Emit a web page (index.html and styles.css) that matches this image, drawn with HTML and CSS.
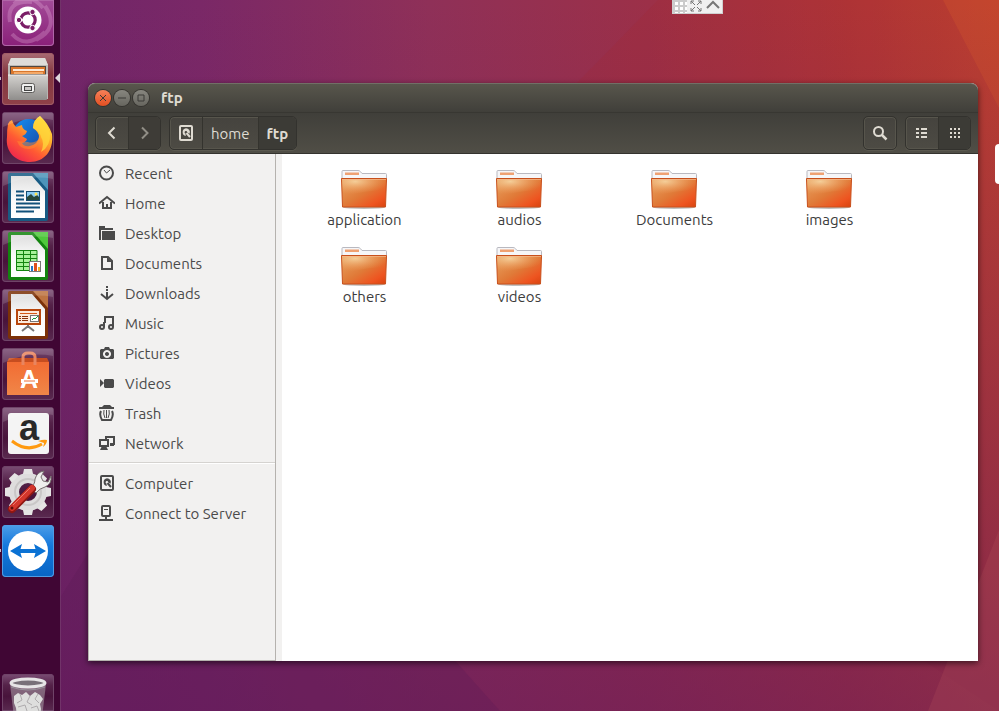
FILE: index.html
```
<!DOCTYPE html>
<html lang="en">
<head>
<meta charset="utf-8">
<meta name="viewport" content="width=device-width, initial-scale=1">
<title>ftp</title>
<link rel="stylesheet" href="styles.css">
</head>

<body>

<!-- shared icons and gradients -->
<svg class="defs" width="0" height="0" aria-hidden="true">
  <defs>
    <linearGradient id="g-folder" x1="0" y1="0" x2="1" y2="1">
      <stop offset="0" stop-color="#e8a563"/>
      <stop offset=".5" stop-color="#e07a38"/>
      <stop offset=".8" stop-color="#ee5420"/>
      <stop offset="1" stop-color="#d8430f"/>
    </linearGradient>
    <radialGradient id="g-shine" cx=".3" cy=".15" r=".75">
      <stop offset="0" stop-color="#f8dcaa" stop-opacity=".8"/>
      <stop offset="1" stop-color="#f0a060" stop-opacity="0"/>
    </radialGradient>
    <linearGradient id="g-metal" x1="0" y1="0" x2="0" y2="1">
      <stop offset="0" stop-color="#d4d2cf"/>
      <stop offset="1" stop-color="#8f8d8b"/>
    </linearGradient>
    <linearGradient id="g-paper" x1="0" y1="0" x2="0" y2="1">
      <stop offset="0" stop-color="#dedede"/>
      <stop offset=".5" stop-color="#fafafa"/>
      <stop offset="1" stop-color="#ffffff"/>
    </linearGradient>
    <linearGradient id="g-fox" x1=".9" y1="0" x2=".2" y2="1">
      <stop offset="0" stop-color="#fff04a"/>
      <stop offset=".35" stop-color="#ffb02a"/>
      <stop offset=".65" stop-color="#ff5b33"/>
      <stop offset="1" stop-color="#ec2050"/>
    </linearGradient>
    <linearGradient id="g-globe" x1="0" y1="0" x2="1" y2="1">
      <stop offset="0" stop-color="#1490f5"/>
      <stop offset="1" stop-color="#1b3f98"/>
    </linearGradient>
    <linearGradient id="g-bag" x1="0" y1="0" x2="0" y2="1">
      <stop offset="0" stop-color="#f26c33"/>
      <stop offset="1" stop-color="#f08648"/>
    </linearGradient>
    <linearGradient id="g-wall" x1="0" y1="0" x2="1" y2="0">
      <stop offset="0" stop-color="#6c2469"/>
      <stop offset=".2" stop-color="#7a2867"/>
      <stop offset=".43" stop-color="#8f3058"/>
      <stop offset=".65" stop-color="#9c3048"/>
      <stop offset=".85" stop-color="#b03638"/>
      <stop offset="1" stop-color="#c04430"/>
    </linearGradient>
    <linearGradient id="g-dusk" x1="0" y1="0" x2="0" y2="1">
      <stop offset="0" stop-color="#68205c" stop-opacity="0"/>
      <stop offset="1" stop-color="#641a5c" stop-opacity=".6"/>
    </linearGradient>
  </defs>

  <symbol id="folder" viewBox="1 0 48 42">
    <path d="M2 14V3.500q0-1 1-1h15q1.500 0 2.500 1.200l1.500 1.800h23.500q1 0 1 1V14z" fill="#f6f6f8" stroke="#b9b9c0"/>
    <path d="M5 4.500h14v2.500H5z" fill="#efa172"/>
    <ellipse cx="24" cy="39.500" rx="21" ry="1.500" fill="#000" opacity=".25"/>
    <path d="M1.500 10.500h45l-1 28.500H2.500z" fill="url(#g-folder)" stroke="#c8501c"/>
    <path d="M2 11h44l-.3 11Q30 22 3 28z" fill="url(#g-shine)"/>
    <path d="M2 11.500h44" stroke="#f5b98c" opacity=".7"/>
  </symbol>

  <symbol id="disk" viewBox="0 0 16 16">
    <path fill="currentColor" fill-rule="evenodd" d="M3 0h10a2 2 0 0 1 2 2v12a2 2 0 0 1-2 2H3a2 2 0 0 1-2-2V2a2 2 0 0 1 2-2zm0 2v12h10V2z"/>
    <path fill="currentColor" fill-rule="evenodd" d="M8 3.200a3.900 3.900 0 0 1 3.500 5.600L9.200 7.200A1.300 1.300 0 1 0 7.500 8.500l.3 2.400A3.900 3.900 0 0 1 8 3.200z"/>
    <path d="M8.500 8l3.500 4" stroke="currentColor" stroke-width="2"/>
  </symbol>

  <symbol id="tile-shine" viewBox="0 0 52 52">
    <path d="M1 1h50v7Q26 3 1 15z" fill="#fff" opacity=".14"/>
  </symbol>
</svg>

<svg class="wallpaper" viewBox="0 0 999 711" preserveAspectRatio="none" aria-hidden="true">
  <rect width="999" height="711" fill="url(#g-wall)"/>
  <path d="M658 0L570 90 400 310 999 711V0z" fill="#a8282c" opacity=".18"/>
  <path d="M943 0l56 108V0z" fill="#d85a2c" opacity=".3"/>
  <rect width="999" height="711" fill="url(#g-dusk)"/>
  <path d="M60 598L200 375 500 711H60z" fill="#5c1a56" opacity=".3"/>
  <path d="M999 530L928 711h71z" fill="#c05a60" opacity=".2"/>
</svg>

<nav class="launcher" aria-label="Launcher">
  <button class="tile tile-first dash" aria-label="Search your computer">
    <svg viewBox="0 0 52 52">
      <path d="M8 28Q4 6 30 8M43 12Q58 34 34 46M10 40Q24 56 43 38M12 10Q26-4 41 14" fill="none" stroke="#eebce4" stroke-width="4" opacity=".28"/>
      <circle cx="26" cy="26" r="13.500" fill="#fff"/>
      <circle cx="26" cy="26" r="7.200" fill="none" stroke="#7a1c66" stroke-width="3.200"/>
      <path d="M26 26H14M26 26l6 10.500M26 26l6-10.500" stroke="#fff" stroke-width="1.500"/>
      <g fill="#7a1c66" stroke="#fff"><circle cx="17" cy="26" r="2.700"/><circle cx="30.500" cy="34" r="2.700"/><circle cx="30.500" cy="18" r="2.700"/></g>
    </svg>
  </button>
  <button class="tile files running active" aria-label="Files">
    <svg viewBox="0 0 52 52">
      <path d="M9 5h34l3 7v34H6V12z" fill="#bdbbb8"/>
      <path d="M9 5h34l3 7H6z" fill="#dedcda"/>
      <path d="M8 13h36v10H8z" fill="#504640"/>
      <path d="M9 14h34v7H9z" fill="#d9762c"/>
      <path d="M11 16h31v2H11z" fill="#fbe9d6"/>
      <path d="M12 19h29v2H12z" fill="#f4a968"/>
      <path d="M6 22h40v1l-1 23q0 1-1 1H8q-1 0-1-1z" fill="url(#g-metal)"/>
      <path d="M6 22h40" stroke="#efedeb"/>
      <rect x="19.500" y="30.500" width="13" height="9" rx="2" fill="#f0f0ef" stroke="#5d5b59"/>
      <rect x="22.500" y="33.500" width="7" height="4" fill="#c9c7c5" stroke="#444"/>
    </svg>
  </button>
  <button class="tile" aria-label="Firefox">
    <svg viewBox="0 0 52 52">
      <circle cx="27" cy="24" r="17" fill="url(#g-globe)"/>
      <path d="M6 12q1-3 4-4 1 4 4 7l6-2q0 4 5 6-1 4-5 5 3 2 5 3-1 3-5 4 2 4 8 3 8-2 9-9 0-5-6-9 0-8 7-12 8 7 12 18c2 17-8 28-22 28S3 40 5 25q0-8 1-13z" fill="url(#g-fox)"/>
      <path d="M31 16q0-8 7-12 7 8 10 17 1 13-9 19 4-9 0-15-1-5-8-9z" fill="#ffd83c" opacity=".75"/>
      <path d="M15 29q3 9 13 8 9-1 10-11-6 6-12 4z" fill="#ff8a30" opacity=".5"/>
      <use href="#tile-shine"/>
    </svg>
  </button>
  <button class="tile" aria-label="LibreOffice Writer">
    <svg viewBox="0 0 52 52">
      <path d="M8 2h38v46q0 2-2 2H8q-2 0-2-2V4q0-2 2-2z" fill="#185b84"/>
      <path d="M31 2h15v17z" fill="#4d94ba"/>
      <path d="M9 5h21l13 15v27H9z" fill="url(#g-paper)"/>
      <path d="M14 20.500h8M14 24.500h8M14 28.500h8M14 32.500h24M14 36.500h24M14 40.500h18" stroke="#11517a" stroke-width="2"/>
      <rect x="24.500" y="20.500" width="13" height="9" fill="#8ccdf5" stroke="#174e72"/>
      <path d="M25 29v-3l4-3 3 3 3-2 2 2v3z" fill="#28483a"/>
      <circle cx="34" cy="23" r="1.500" fill="#ffe450"/>
      <use href="#tile-shine"/>
    </svg>
  </button>
  <button class="tile" aria-label="LibreOffice Calc">
    <svg viewBox="0 0 52 52">
      <path d="M8 2h38v46q0 2-2 2H8q-2 0-2-2V4q0-2 2-2z" fill="#13840f"/>
      <path d="M31 2h15v17z" fill="#50c83c"/>
      <path d="M9 5h21l13 15v27H9z" fill="url(#g-paper)"/>
      <path d="M14 20h21v20H14z" fill="#a8f29a"/>
      <path d="M14.500 20v20.500H35V20.500H14M14 24.500h21M14 28.500h21M14 32.500h21M14 36.500h21M21.500 20v20M28.500 20v20" fill="none" stroke="#13840f"/>
      <rect x="27.500" y="31.500" width="11" height="10" fill="#fff" stroke="#777"/>
      <path d="M29 36h2v5h-2z" fill="#2478c8"/><path d="M32 33h3v8h-3z" fill="#e0501c"/><path d="M36 37h2v4h-2z" fill="#f0b030"/>
      <use href="#tile-shine"/>
    </svg>
  </button>
  <button class="tile" aria-label="LibreOffice Impress">
    <svg viewBox="0 0 52 52">
      <path d="M8 2h38v46q0 2-2 2H8q-2 0-2-2V4q0-2 2-2z" fill="#7c3108"/>
      <path d="M31 2h15v17z" fill="#bd7442"/>
      <path d="M9 5h21l13 15v27H9z" fill="url(#g-paper)"/>
      <path d="M20 42l5-4h2l5 4M26 36v3" fill="none" stroke="#777" stroke-width="2"/>
      <rect x="15" y="21" width="23" height="14" fill="#fdebdc" stroke="#b8460c" stroke-width="2"/>
      <path d="M18 24.500h17" stroke="#d55a18"/>
      <path d="M17 27.500h2m1 0h6m-9 2h2m1 0h6m-9 2h2m1 0h6" stroke="#8b3208"/>
      <rect x="28.500" y="26.500" width="8" height="6" fill="#fff" stroke="#777"/>
      <path d="M30 31l2-2 1 1 3-3" fill="none" stroke="#1b9b3c"/>
      <use href="#tile-shine"/>
    </svg>
  </button>
  <button class="tile" aria-label="Ubuntu Software">
    <svg viewBox="0 0 52 52">
      <path d="M7 10h38l2 4H5z" fill="#c64d20"/>
      <path d="M5 14h42v33H5z" fill="url(#g-bag)"/>
      <path d="M21 17V9q0-4 5-4h2q5 0 5 4v8" fill="none" stroke="#e88560" stroke-width="3"/>
      <text x="27" y="40" text-anchor="middle" class="bag-letter">A</text>
      <path d="M19 31h17v4H19z" fill="#fff"/><path d="M22 33h11" stroke="#ee7137"/>
      <use href="#tile-shine"/>
    </svg>
  </button>
  <button class="tile" aria-label="Amazon">
    <svg viewBox="0 0 52 52">
      <rect x="6" y="6" width="41" height="41" rx="3" fill="#f4f4f4"/>
      <text x="27" y="33" text-anchor="middle" class="shop-letter">a</text>
      <path d="M10 34q15 12 30 3" fill="none" stroke="#ff9a10" stroke-width="3"/>
      <path d="M36 34q6-2 9-1 0 4-4 7 1-3 1-4z" fill="#ff9a10"/>
      <use href="#tile-shine"/>
    </svg>
  </button>
  <button class="tile" aria-label="System Settings">
    <svg viewBox="0 0 52 52">
      <g transform="translate(26 26)">
        <circle r="14" fill="none" stroke="#dedddd" stroke-width="10"/>
        <g fill="#e5e4e4">
          <path id="tooth" d="M-5-18l1-5h8l1 5z"/>
          <use href="#tooth" transform="rotate(45)"/><use href="#tooth" transform="rotate(90)"/>
          <use href="#tooth" transform="rotate(135)"/><use href="#tooth" transform="rotate(180)"/>
          <use href="#tooth" transform="rotate(225)"/><use href="#tooth" transform="rotate(270)"/>
          <use href="#tooth" transform="rotate(315)"/>
        </g>
        <circle r="13" fill="none" stroke="#c9c7c7" stroke-width="2"/>
      </g>
      <path d="M28 22q5-3 5-9 2-7 9-8l-3 6 2 4 5 1 3-6q1 8-6 11-5 1-9 6z" fill="#efefed" stroke="#77706f"/>
      <path d="M10 43l20-20" stroke="#8f1712" stroke-width="8" stroke-linecap="round"/>
      <path d="M10 42l20-20" stroke="#d3362c" stroke-width="6" stroke-linecap="round"/>
      <path d="M11 39l17-17" stroke="#ee7a6c" stroke-width="1"/>
      <circle cx="10" cy="42" r="1.500" fill="#5e0d0b"/>
    </svg>
  </button>
  <button class="tile remote running" aria-label="TeamViewer">
    <svg viewBox="0 0 52 52">
      <circle cx="26" cy="26" r="20" fill="#fff"/>
      <path d="M8 26l12-7-1.500 5h15L32 19l12 7-12 7 1.500-5h-15l1.500 5z" fill="#0b72d4"/>
    </svg>
  </button>
  <button class="tile tile-last" aria-label="Trash">
    <svg viewBox="0 0 52 52">
      <path d="M8 10h36l-5 42H13z" fill="#b6afb4" opacity=".5"/>
      <path d="M12 22l4-3 4 2 4-3 4 4 5-4 5 3 3 4-3 5 1 5-3 17H16l-2-18-2-5z" fill="#dededd"/>
      <path d="M18 20l2 6-5 3M28 22l-3 6 5 3M36 20l-3 5 4 4M16 33l7-2 2 6M29 34l6-2 2 5" fill="none" stroke="#aeabad"/>
      <ellipse cx="26" cy="9" rx="17" ry="4" fill="#777078" stroke="#e6e5e6" stroke-width="3"/>
      <path d="M9 13q17 6 34 0" fill="none" stroke="#98939a"/>
    </svg>
  </button>
</nav>

<main class="desktop">
  <section class="window" aria-label="ftp">
    <header class="titlebar">
      <button class="wm wm-close" aria-label="Close"><svg viewBox="0 0 16 16"><path d="M5 5l6 6M11 5l-6 6"/></svg></button>
      <button class="wm" aria-label="Minimize"><svg viewBox="0 0 16 16"><path d="M4 8h8"/></svg></button>
      <button class="wm" aria-label="Maximize"><svg viewBox="0 0 16 16"><path d="M5 5h6v6H5z"/></svg></button>
      <h1 class="title">ftp</h1>
    </header>

    <div class="toolbar">
      <div class="group">
        <button class="btn" aria-label="Back"><svg viewBox="0 0 16 16"><path d="M10.500 2.500L5 8l5.500 5.500" fill="none" stroke="currentColor" stroke-width="2"/></svg></button>
        <button class="btn btn-off" aria-label="Forward"><svg viewBox="0 0 16 16"><path d="M5 2.500L10.500 8 5 13.500" fill="none" stroke="currentColor" stroke-width="2"/></svg></button>
      </div>
      <div class="group path">
        <button class="btn" aria-label="Computer"><svg viewBox="0 0 16 16"><use href="#disk"/></svg></button>
        <button class="btn">home</button>
        <button class="btn btn-on">ftp</button>
      </div>
      <div class="group search">
        <button class="btn" aria-label="Search"><svg viewBox="0 0 16 16"><path d="M10 10l4.500 4.500" stroke="currentColor" stroke-width="2.500"/><circle cx="6.500" cy="6.500" r="4.500" fill="none" stroke="currentColor" stroke-width="2"/></svg></button>
      </div>
      <div class="group">
        <button class="btn" aria-label="List view"><svg viewBox="0 0 16 16"><path d="M2 3h3v2H2zm5 0h6v2H7zM2 7h3v2H2zm5 0h6v2H7zm-5 4h3v2H2zm5 0h6v2H7z" fill="currentColor"/></svg></button>
        <button class="btn btn-on" aria-label="Icon view"><svg viewBox="0 0 16 16"><path d="M3 3h2v2H3zm4 0h2v2H7zm4 0h2v2h-2zM3 7h2v2H3zm4 0h2v2H7zm4 0h2v2h-2zM3 11h2v2H3zm4 0h2v2H7zm4 0h2v2h-2z" fill="currentColor"/></svg></button>
      </div>
    </div>

    <div class="content">
      <nav class="sidebar" aria-label="Places">
        <ul class="places">
          <li><a href="#"><svg viewBox="0 0 16 16"><circle cx="7.500" cy="8" r="6.500" fill="none" stroke="currentColor" stroke-width="2"/><path d="M5 5l2.500 3L11 5" fill="none" stroke="currentColor"/></svg>Recent</a></li>
          <li><a href="#"><svg viewBox="0 0 16 16"><path d="M0 8.500L8 2l8 6.500M4 7v6h8V7" fill="none" stroke="currentColor" stroke-width="2"/><path d="M7 9h2v4H7z" fill="currentColor"/></svg>Home</a></li>
          <li><a href="#"><svg viewBox="0 0 16 16"><path d="M0 1h6v2h8v2H2v10H0z" fill="currentColor"/><path d="M3 6h13v9H3z" fill="currentColor"/></svg>Desktop</a></li>
          <li><a href="#"><svg viewBox="0 0 16 16"><path d="M3 2h6l4 4v8H3z" fill="none" stroke="currentColor" stroke-width="2"/><path d="M8 2v5h5z" fill="currentColor"/></svg>Documents</a></li>
          <li><a href="#"><svg viewBox="0 0 16 16"><path d="M7 1h2v2H7zm0 3h2v2H7zm0 3h2v6H7z" fill="currentColor"/><path d="M2 9l6 5 6-5" fill="none" stroke="currentColor" stroke-width="2"/></svg>Downloads</a></li>
          <li><a href="#"><svg viewBox="0 0 16 16"><path d="M5 12V7m0 0h1V2h8v10M6 3v4" fill="none" stroke="currentColor" stroke-width="2"/><circle cx="3" cy="12" r="2" fill="none" stroke="currentColor" stroke-width="2"/><circle cx="12" cy="12" r="2" fill="none" stroke="currentColor" stroke-width="2"/></svg>Music</a></li>
          <li><a href="#"><svg viewBox="0 0 16 16"><path fill="currentColor" fill-rule="evenodd" d="M2 4h3l1-2h4l1 2h3l1 1v8l-1 1H2l-1-1V5zm6 1a4 4 0 1 0 .01 0zm0 2a2 2 0 1 1-.01 0z"/></svg>Pictures</a></li>
          <li><a href="#"><svg viewBox="0 0 16 16"><path d="M1 4l4 4-4 4zM6 4h8l1 1v7l-1 1H6l-1-1V5z" fill="currentColor"/></svg>Videos</a></li>
          <li><a href="#"><svg viewBox="0 0 16 16"><path d="M0 2h3l2-2h6l2 2h2v2H0z" fill="currentColor"/><path d="M2 6q-2 4 1 9h9q3-5 1-9" fill="none" stroke="currentColor" stroke-width="2"/><path d="M5 5q-1 4 1 8M10 5q1 4-1 8M7.500 5v8" fill="none" stroke="currentColor"/></svg>Trash</a></li>
          <li><a href="#"><svg viewBox="0 0 16 16"><path d="M1 5h8v6H1zM7 4V2h8v7h-4" fill="none" stroke="currentColor" stroke-width="2"/><path d="M3 11h4l2 4H1zM11 9h4v2h-4z" fill="currentColor"/></svg>Network</a></li>
        </ul>
        <ul class="places devices">
          <li><a href="#"><svg viewBox="0 0 16 16"><use href="#disk"/></svg>Computer</a></li>
          <li><a href="#"><svg viewBox="0 0 16 16"><rect x="3" y="1" width="8" height="10" rx="1" fill="none" stroke="currentColor" stroke-width="2"/><path d="M5 4.500h4" stroke="currentColor"/><path d="M6 11h2v3H6zM0 14h14v2H0z" fill="currentColor"/></svg>Connect to Server</a></li>
        </ul>
      </nav>

      <ul class="folders">
        <li><a href="#"><svg viewBox="0 0 48 42"><use href="#folder"/></svg>application</a></li>
        <li><a href="#"><svg viewBox="0 0 48 42"><use href="#folder"/></svg>audios</a></li>
        <li><a href="#"><svg viewBox="0 0 48 42"><use href="#folder"/></svg>Documents</a></li>
        <li><a href="#"><svg viewBox="0 0 48 42"><use href="#folder"/></svg>images</a></li>
        <li><a href="#"><svg viewBox="0 0 48 42"><use href="#folder"/></svg>others</a></li>
        <li><a href="#"><svg viewBox="0 0 48 42"><use href="#folder"/></svg>videos</a></li>
      </ul>
    </div>
  </section>
</main>

<!-- remote session controls, over the desktop -->
<div class="session">
  <span class="grip"></span>
  <button aria-label="Full screen"><svg viewBox="0 0 14 14"><path d="M2 5V2h3M9 2h3v3M12 9v3H9M5 12H2V9M2 2l4 4M12 2L8 6M12 12L8 8M2 12l4-4" fill="none" stroke="#777"/></svg></button>
  <button aria-label="Collapse"><svg viewBox="0 0 14 14"><path d="M1 9l6-6 6 6" fill="none" stroke="#777" stroke-width="2"/></svg></button>
</div>
<button class="side-handle" aria-label="Open panel"></button>

</body>
</html>
```

FILE: styles.css
```
* {
  box-sizing: border-box;
}

body {
  display: flex;
  height: 100vh;
  margin: 0;
  overflow: hidden;
  font-family: Ubuntu, "Noto Sans", sans-serif;
  font-size: 15px;
  color: #4a4a4a;
}

button {
  margin: 0;
  padding: 0;
  border: 0;
  background: none;
  color: inherit;
  font: inherit;
}

a {
  color: inherit;
  text-decoration: none;
}

ul {
  margin: 0;
  padding: 0;
  list-style: none;
}

svg {
  display: block;
  flex: none;
}

.defs {
  position: absolute;
}

.wallpaper {
  position: absolute;
  z-index: -1;
  width: 100%;
  height: 100%;
}

/* launcher */

.launcher {
  display: flex;
  flex: none;
  flex-direction: column;
  gap: 7px;
  width: 61px;
  padding-left: 2px;
  border-right: 1px solid #713369;
  background: #400634;
}

.tile {
  position: relative;
  flex: none;
  width: 52px;
  height: 52px;
  border-radius: 4px;
  background: linear-gradient(#7a4d74, #552249 30%, #48133b 60%, #5a2a50);
  box-shadow: inset 0 0 0 1px #6f4468;
}

.tile svg {
  width: 52px;
  height: 52px;
}

.tile-first {
  display: flex;
  align-items: flex-end;
  height: 46px;
  overflow: hidden;
  border-radius: 0 0 4px 4px;
}

.tile-last {
  height: 37px;
  margin-top: auto;
  overflow: hidden;
  border-radius: 4px 4px 0 0;
}

.dash {
  background: linear-gradient(#a34b98, #8a2079);
  box-shadow: inset 0 0 0 1px #b065a7;
}

.files {
  background: linear-gradient(#a96a74, #83363f 40%, #8f4149);
  box-shadow: inset 0 0 0 1px #a05c66;
}

.remote {
  background: linear-gradient(#4c9de8, #1478dc 40%, #0864c4);
  box-shadow: inset 0 0 0 1px #4f9ce4;
}

.running::before {
  content: "";
  position: absolute;
  top: 24px;
  left: -2px;
  width: 1px;
  height: 3px;
  background: #c9bcc6;
}

.active::after {
  content: "";
  position: absolute;
  top: 20px;
  right: -6px;
  border: 5px solid transparent;
  border-left: 0;
  border-right-color: #ddd6dc;
}

.bag-letter {
  fill: #fff;
  font: bold 25px "Liberation Sans", sans-serif;
}

.shop-letter {
  fill: #292929;
  font: bold 36px "Liberation Sans", sans-serif;
}

/* file manager window */

.desktop {
  display: flex;
  flex: 1;
  min-width: 0;
  padding: 83px 21px 50px 27px;
}

.window {
  display: flex;
  flex: 1;
  flex-direction: column;
  min-width: 0;
  border-radius: 7px 7px 0 0;
  background: #fff;
  box-shadow: 0 2px 6px rgba(0, 0, 0, .6);
}

.titlebar {
  display: flex;
  align-items: center;
  gap: 3px;
  height: 29px;
  padding-left: 7px;
  border-top: 1px solid #716f66;
  border-radius: 7px 7px 0 0;
  background: linear-gradient(#58564c, #403f3a);
  color: #dfdbd2;
}

.title {
  margin: 0 0 0 9px;
  font-size: 15px;
  line-height: 20px;
}

.wm {
  width: 16px;
  height: 16px;
  border-radius: 50%;
  background: linear-gradient(#87867f, #67665f);
  box-shadow: 0 0 0 1px #34332f;
}

.wm path {
  fill: none;
  stroke: #3b3a36;
}

.wm-close {
  background: linear-gradient(#f78159, #e34f21);
}

.toolbar {
  display: flex;
  align-items: center;
  gap: 8px;
  height: 42px;
  padding: 0 7px;
  border-top: 1px solid #383732;
  border-bottom: 1px solid #34332e;
  background: linear-gradient(#403f3a, #504e46);
  color: #dfdbd2;
}

.group {
  display: flex;
  height: 34px;
  border: 1px solid #33322e;
  border-radius: 5px;
  background: linear-gradient(#45433e, #4d4b44);
  box-shadow: inset 0 0 0 1px #57554c, 0 1px 0 #5b594f;
}

.btn {
  display: flex;
  align-items: center;
  justify-content: center;
  min-width: 32px;
  border-radius: 4px;
}

.btn + .btn {
  border-left: 1px solid #34332e;
  border-radius: 0 4px 4px 0;
}

.btn svg {
  width: 16px;
  height: 16px;
}

.btn-off {
  background: #3e3c37;
  color: #918e86;
}

.btn-on {
  background: #3c3b36;
  font-weight: bold;
}

.path .btn + .btn {
  padding: 0 8px;
}

.search {
  margin-left: auto;
}

.content {
  display: flex;
  flex: 1;
  min-height: 0;
}

.sidebar {
  flex: none;
  width: 188px;
  padding-top: 4px;
  border: solid #b5b2ae;
  border-width: 0 1px 1px;
  background: #f2f1f0;
}

.places a {
  display: flex;
  align-items: center;
  gap: 10px;
  height: 30px;
  padding-left: 10px;
}

.places svg {
  width: 16px;
  height: 16px;
}

.devices {
  margin-top: 4px;
  padding-top: 5px;
  border-top: 1px solid #d5d3d0;
  box-shadow: inset 0 1px 0 #fff;
}

.folders {
  display: grid;
  flex: 1;
  grid-template-columns: repeat(auto-fill, 155px);
  grid-auto-rows: 77px;
  align-content: start;
  padding: 14px 0 0 5px;
  border-left: 6px solid #f2f1f0;
  color: #3c3c3c;
}

.folders a {
  display: flex;
  flex-direction: column;
  align-items: center;
  line-height: 20px;
}

.folders svg {
  width: 48px;
  height: 42px;
}

/* overlays */

.session {
  position: absolute;
  top: 0;
  left: 672px;
  display: flex;
  align-items: flex-end;
  width: 51px;
  height: 14px;
  border: solid #d0d0d0;
  border-width: 0 1px 1px;
  background: #f0f0f0;
}

.grip {
  width: 14px;
  height: 13px;
  background: repeating-linear-gradient(#ccc 0 2px, transparent 2px 5px), repeating-linear-gradient(90deg, #ccc 0 2px, #fff 2px 5px);
}

.session button {
  flex: 1;
}

.session svg {
  width: 14px;
  height: 14px;
  margin: auto;
}

.session button:last-child svg {
  width: 16px;
}

.side-handle {
  position: absolute;
  top: 144px;
  right: 0;
  width: 4px;
  height: 40px;
  border-radius: 4px 0 0 4px;
  background: #fff;
}
```
